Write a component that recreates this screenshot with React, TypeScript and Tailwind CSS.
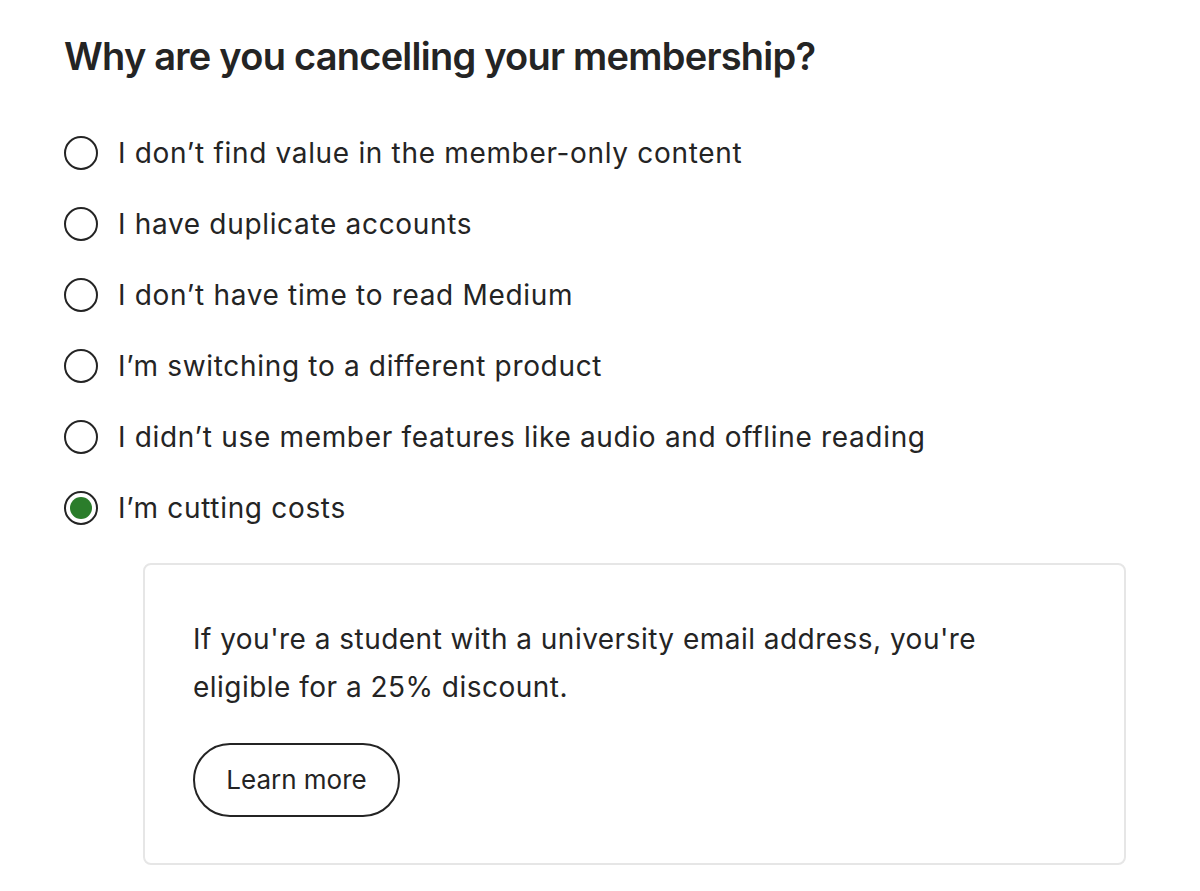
import React, { useState } from 'react';

const reasons = [
  'I don’t find value in the member-only content',
  'I have duplicate accounts',
  'I don’t have time to read Medium',
  'I’m switching to a different product',
  'I didn’t use member features like audio and offline reading',
  'I’m cutting costs',
];

function Radio({ checked }: { checked: boolean }) {
  return (
    <span className="flex h-[34px] w-[34px] shrink-0 items-center justify-center rounded-full border-2 border-[#242424] bg-white">
      {checked && <span className="h-[22px] w-[22px] rounded-full bg-[#2b7d2b]" />}
    </span>
  );
}

export default function App() {
  const [selected, setSelected] = useState<number>(5);

  return (
    <div className="min-h-screen bg-white font-['Inter',sans-serif] text-[#242424]">
      <div className="px-[64px] pt-[32px]">
        <h1 className="text-[38px] font-semibold leading-[48px] tracking-[-0.02em]">
          Why are you cancelling your membership?
        </h1>

        <div className="mt-[51px] flex flex-col gap-[27px]">
          {reasons.map((r, i) => (
            <label
              key={r}
              className="flex h-[44px] cursor-pointer items-center gap-[20px]"
              onClick={() => setSelected(i)}
            >
              <Radio checked={selected === i} />
              <span className="text-[28px] leading-[44px] tracking-[0.024em]">{r}</span>
            </label>
          ))}
        </div>

        {selected === 5 && (
          <div className="ml-[79px] mt-[33px] w-[983px] rounded-[8px] border-2 border-[#e6e6e6] px-[48px] pb-[46px] pt-[50px]">
            <p className="text-[28px] leading-[48px] tracking-[0.017em]">
              If you're a student with a university email address, you're
              <br />
              eligible for a 25% discount.
            </p>
            <button className="mt-[32px] h-[74px] w-[207px] rounded-full border-2 border-[#242424] text-[26px] leading-none">
              Learn more
            </button>
          </div>
        )}
      </div>
    </div>
  );
}
